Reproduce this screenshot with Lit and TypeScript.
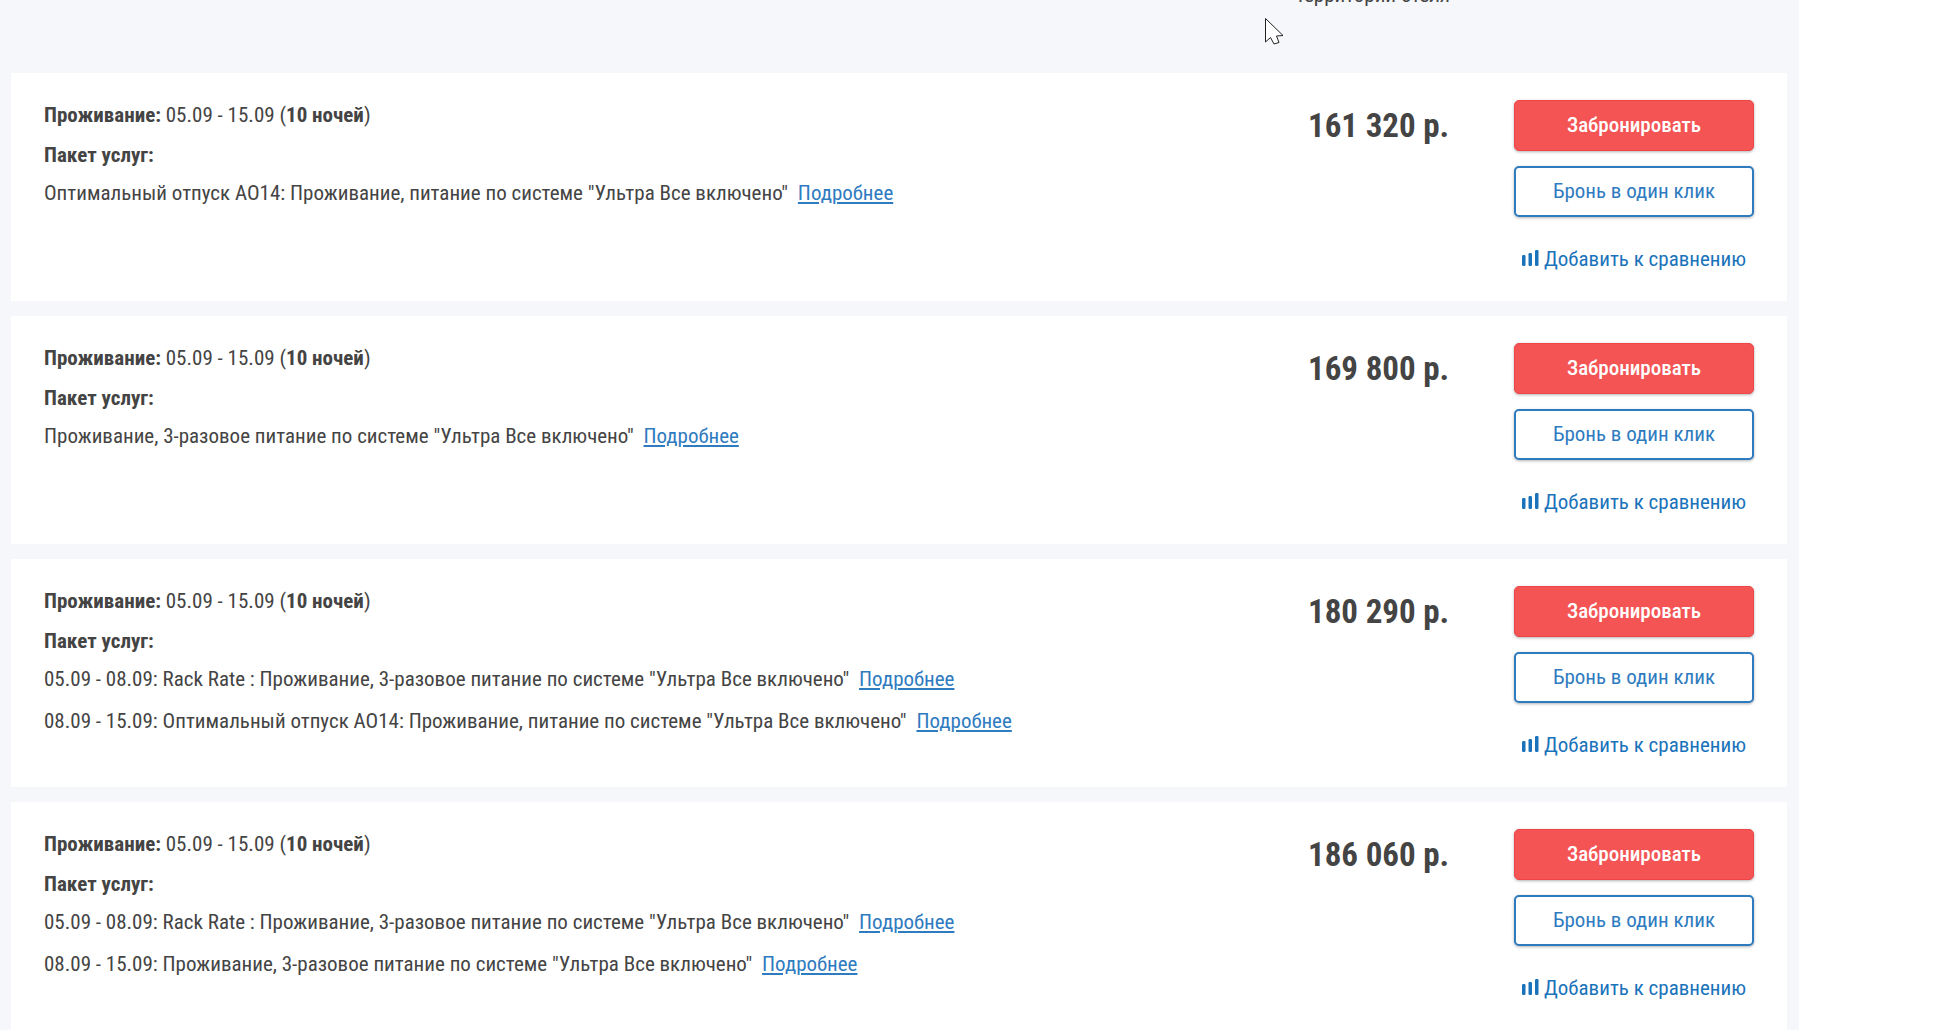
import { LitElement, html, css } from "lit";
import { customElement } from "lit/decorators.js";

interface Offer {
  price: string;
  lines: string[];
}

const OFFERS: Offer[] = [
  { price: "161 320 р.", lines: ['Оптимальный отпуск АО14: Проживание, питание по системе "Ультра Все включено"'] },
  { price: "169 800 р.", lines: ['Проживание, 3-разовое питание по системе "Ультра Все включено"'] },
  {
    price: "180 290 р.",
    lines: [
      '05.09 - 08.09: Rack Rate : Проживание, 3-разовое питание по системе "Ультра Все включено"',
      '08.09 - 15.09: Оптимальный отпуск АО14: Проживание, питание по системе "Ультра Все включено"',
    ],
  },
  {
    price: "186 060 р.",
    lines: [
      '05.09 - 08.09: Rack Rate : Проживание, 3-разовое питание по системе "Ультра Все включено"',
      '08.09 - 15.09: Проживание, 3-разовое питание по системе "Ультра Все включено"',
    ],
  },
];

@customElement("app-root")
export class AppRoot extends LitElement {
  static styles = css`
    :host {
      display: block;
      position: relative;
      height: 1033px;
      overflow: hidden;
      background: #fff;
      font-family: "Roboto Condensed", "Liberation Sans Narrow", Roboto, sans-serif;
      font-stretch: 75%;
      font-size: 21px;
      color: #444;
    }
    .page {
      width: 1799px;
      background: #f5f7fb;
      padding: 0 12px 0 11px;
      box-sizing: border-box;
    }
    .top {
      height: 73px;
      overflow: hidden;
      display: flex;
      justify-content: flex-end;
      padding-right: 337px;
      line-height: 20px;
    }
    .top span {
      margin-top: -15px;
    }
    .card {
      display: flex;
      height: 228px;
      margin-bottom: 15px;
      background: #fff;
      padding: 30px 33px 0 33px;
      box-sizing: border-box;
    }
    .info {
      flex: 1;
      min-width: 0;
    }
    .row {
      height: 24px;
      line-height: 24px;
      white-space: nowrap;
    }
    .row.head {
      margin-bottom: 16px;
    }
    .row.line {
      margin: 14px 0 18px;
    }
    .row.line + .row.line {
      margin-top: 0;
    }
    a {
      color: #2f7bbf;
      text-decoration: underline;
      margin-left: 5px;
    }
    .price {
      width: 206px;
      font-size: 33px;
      font-weight: 700;
      line-height: 50px;
      white-space: nowrap;
      margin-top: -2px;
    }
    .actions {
      width: 240px;
      margin-top: -3px;
      display: flex;
      flex-direction: column;
    }
    button {
      height: 51px;
      border-radius: 5px;
      font: inherit;
      font-stretch: inherit;
      background: #fff;
      box-shadow: 0 1px 3px rgba(0, 0, 0, 0.3);
      padding: 0 0 2px;
    }
    .book {
      background: #f45454;
      border: 1px solid #ee4646;
      color: #fff;
      font-weight: 500;
      margin-bottom: 15px;
    }
    .quick {
      border: 2px solid #2f7bbf;
      color: #2f7bbf;
    }
    .compare {
      display: flex;
      align-items: center;
      justify-content: center;
      gap: 5px;
      margin-top: 30px;
      color: #1a73ba;
      line-height: 24px;
      white-space: nowrap;
    }
    .compare svg {
      width: 17px;
      height: 16px;
      margin-top: -2px;
    }
    .cursor {
      position: absolute;
      left: 1264px;
      top: 18px;
    }
  `;

  private renderCard(o: Offer) {
    return html`
      <div class="card">
        <div class="info">
          <div class="row head"><b>Проживание:</b> 05.09 - 15.09 (<b>10 ночей</b>)</div>
          <div class="row"><b>Пакет услуг:</b></div>
          ${o.lines.map((l) => html`<div class="row line">${l} <a href="#">Подробнее</a></div>`)}
        </div>
        <div class="price">${o.price}</div>
        <div class="actions">
          <button class="book">Забронировать</button>
          <button class="quick">Бронь в один клик</button>
          <div class="compare">
            <svg viewBox="0 0 17 16" fill="#1a73ba">
              <rect x="0" y="5" width="3.5" height="11" rx="1.2"></rect>
              <rect x="6.5" y="3" width="3.5" height="13" rx="1.2"></rect>
              <rect x="13" y="0" width="3.5" height="16" rx="1.2"></rect>
            </svg>
            Добавить к сравнению
          </div>
        </div>
      </div>
    `;
  }

  render() {
    return html`
      <div class="page">
        <div class="top"><span>территории отеля</span></div>
        ${OFFERS.map((o) => this.renderCard(o))}
      </div>
      <svg class="cursor" width="20" height="28" viewBox="0 0 20 28">
        <path d="M1.5 .5 L1.5 24 L6.5 19.5 L10 26 L15 24.5 L12.5 18 L19 17.5 Z" fill="#fff" stroke="#222" stroke-width="1"></path>
      </svg>
    `;
  }
}
